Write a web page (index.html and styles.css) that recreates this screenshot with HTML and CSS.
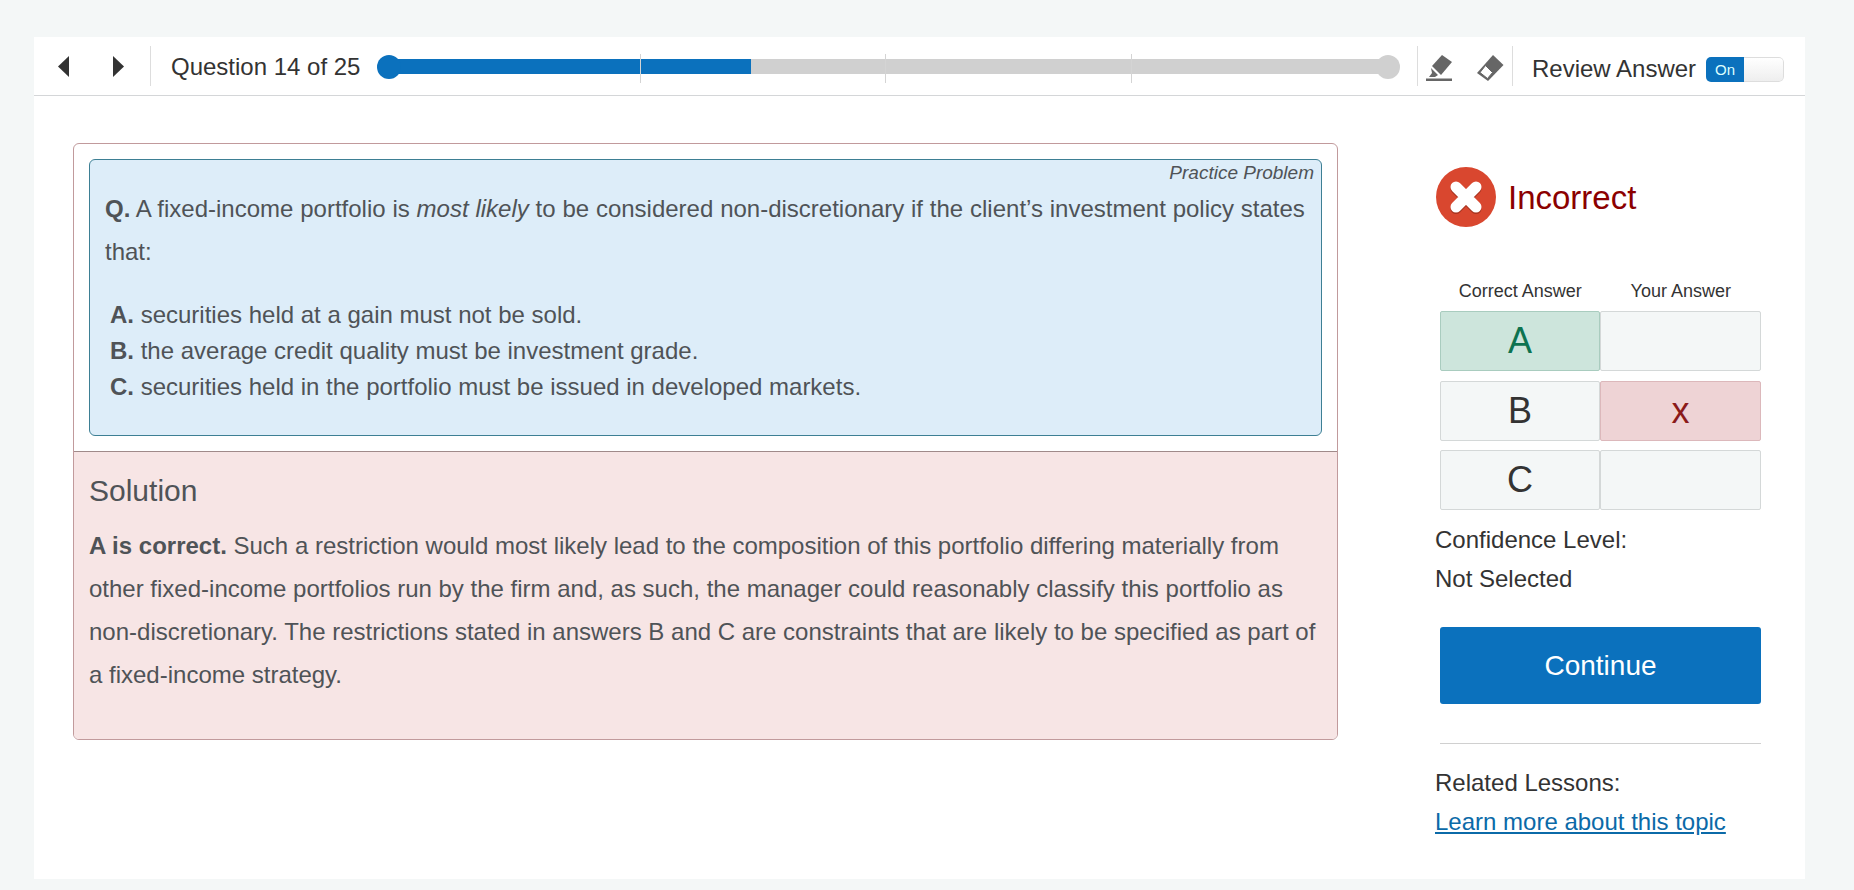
FILE: index.html
```html
<!DOCTYPE html>
<html lang="en">
<head>
    <meta charset="UTF-8">
    <meta name="viewport" content="width=device-width, initial-scale=1.0">
    <title>Question 14 of 25</title>
    <link rel="stylesheet" href="styles.css">
</head>
<body>
    <div class="card">
        <!-- Top toolbar -->
        <div class="toolbar">
            <div class="nav-arrows">
                <svg class="arrow" width="14" height="23" viewBox="0 0 14 23"><path d="M13 1V22L2 11.500Z" fill="#333"/></svg>
                <svg class="arrow" width="14" height="23" viewBox="0 0 14 23"><path d="M1 1V22L12 11.500Z" fill="#333"/></svg>
            </div>
            <div class="question-count">Question 14 of 25</div>
            <div class="progress">
                <div class="progress-fill"></div>
                <span class="tick tick-1"></span>
                <span class="tick tick-2"></span>
                <span class="tick tick-3"></span>
                <span class="thumb thumb-start"></span>
                <span class="thumb thumb-end"></span>
            </div>
            <div class="tools">
                <svg width="26" height="26" viewBox="0 0 26 26">
                    <path d="M16 0 26 7 15 20 6 11Z" fill="#666"/>
                    <path d="M5 13 12 20 9 22H3L6 18Z" fill="#666"/>
                    <rect x="0" y="23.500" width="26" height="2.500" fill="#666"/>
                </svg>
                <svg width="27" height="26" viewBox="0 0 27 26">
                    <path d="M16 0 26.500 10 11 26 0 18Z" fill="#666"/>
                    <path d="M8.500 10.500 15.500 17.500 10.500 23.500 3 17.500Z" fill="#fff" stroke="#666" stroke-width="1"/>
                </svg>
            </div>
            <div class="review">
                <span class="review-label">Review Answer</span>
                <div class="toggle">
                    <span class="toggle-on">On</span>
                    <span class="toggle-off"></span>
                </div>
            </div>
        </div>

        <div class="content">
            <!-- Question + solution -->
            <div class="panel">
                <div class="panel-top">
                    <div class="question">
                        <div class="practice-label">Practice Problem</div>
                        <p class="question-text"><b>Q.</b> A fixed-income portfolio is <i>most likely</i> to be considered non-discretionary if the client’s investment policy states that:</p>
                        <ul class="choices">
                            <li><b>A.</b> securities held at a gain must not be sold.</li>
                            <li><b>B.</b> the average credit quality must be investment grade.</li>
                            <li><b>C.</b> securities held in the portfolio must be issued in developed markets.</li>
                        </ul>
                    </div>
                </div>
                <div class="solution">
                    <h2>Solution</h2>
                    <p><b>A is correct.</b> Such a restriction would most likely lead to the composition of this portfolio differing materially from other fixed-income portfolios run by the firm and, as such, the manager could reasonably classify this portfolio as non-discretionary. The restrictions stated in answers B and C are constraints that are likely to be specified as part of a fixed-income strategy.</p>
                </div>
            </div>

            <!-- Result sidebar -->
            <div class="sidebar">
                <div class="result">
                    <svg width="60" height="60" viewBox="0 0 60 60">
                        <circle cx="30" cy="30" r="30" fill="#d9472f"/>
                        <path d="M20 20 40 40M40 20 20 40" stroke="#a93420" stroke-width="11" stroke-linecap="round" transform="translate(0 1.500)"/>
                        <path d="M20 20 40 40M40 20 20 40" stroke="#fff" stroke-width="11" stroke-linecap="round"/>
                    </svg>
                    <span class="result-label">Incorrect</span>
                </div>
                <div class="answer-heads">
                    <span>Correct Answer</span>
                    <span>Your Answer</span>
                </div>
                <div class="answer-rows">
                    <div class="answer-row">
                        <div class="cell cell-correct">A</div>
                        <div class="cell"></div>
                    </div>
                    <div class="answer-row">
                        <div class="cell">B</div>
                        <div class="cell cell-wrong">x</div>
                    </div>
                    <div class="answer-row">
                        <div class="cell">C</div>
                        <div class="cell"></div>
                    </div>
                </div>
                <div class="info">Confidence Level:</div>
                <div class="info">Not Selected</div>
                <button class="continue">Continue</button>
                <hr class="divider">
                <div class="info">Related Lessons:</div>
                <div class="info"><a href="#" class="lesson-link">Learn more about this topic</a></div>
            </div>
        </div>
    </div>
</body>
</html>
```

FILE: styles.css
```css
/* General */
body {
    margin: 0;
    background-color: #f4f7f7;
    font-family: "Liberation Sans", Arial, sans-serif;
    color: #333;
    height: 890px;
    overflow: hidden;
}

.card {
    margin: 37px 49px 0 34px;
    height: 842px;
    background-color: #fff;
}

/* Toolbar */
.toolbar {
    display: flex;
    align-items: center;
    height: 58px;
    border-bottom: 1px solid #d4d6d8;
}

.nav-arrows {
    display: flex;
    align-items: center;
    gap: 42px;
    width: 117px;
    height: 40px;
    padding-left: 22px;
    box-sizing: border-box;
    border-right: 1px solid #ddd;
}

.question-count {
    margin: 2px 0 0 20px;
    width: 207px;
    font-size: 24px;
    white-space: nowrap;
}

.progress {
    position: relative;
    width: 1021px;
    height: 15px;
    border-radius: 8px;
    background-color: #d0d0d0;
}

.progress-fill {
    width: 373px;
    height: 100%;
    border-radius: 8px 0 0 8px;
    background-color: #0b71bd;
}

.tick {
    position: absolute;
    top: -5px;
    width: 1px;
    height: 29px;
    background-color: #d4d4d4;
}

.tick-1 { left: 262px; }
.tick-2 { left: 507px; }
.tick-3 { left: 753px; }

.thumb {
    position: absolute;
    top: -4px;
    width: 24px;
    height: 24px;
    border-radius: 50%;
}

.thumb-start { left: -1px; background-color: #0b71bd; }
.thumb-end { right: -1px; background-color: #d0d0d0; }

.tools {
    display: flex;
    align-items: center;
    gap: 25px;
    box-sizing: border-box;
    height: 40px;
    margin-left: 18px;
    padding: 4px 8px 0 8px;
    border-left: 1px solid #ddd;
    border-right: 1px solid #ddd;
}

.review {
    display: flex;
    align-items: center;
    gap: 10px;
    margin: 7px 0 0 19px;
    font-size: 24px;
}

.review-label {
    margin-bottom: 2px;
}

.toggle {
    display: flex;
    width: 78px;
    height: 25px;
    border-radius: 5px;
    overflow: hidden;
}

.toggle-on {
    width: 38px;
    background-color: #0b71bd;
    color: #dff;
    font-size: 15px;
    line-height: 25px;
    text-align: center;
}

.toggle-off {
    flex: 1;
    background: linear-gradient(#fff, #eee);
    border: 1px solid #ddd;
    border-left: none;
    border-radius: 0 5px 5px 0;
}

/* Main layout */
.content {
    display: flex;
    padding: 47px 0 0 39px;
}

.panel {
    box-sizing: border-box;
    width: 1265px;
    height: 597px;
    border: 1px solid #c19a9c;
    border-radius: 6px;
    overflow: hidden;
    color: #4f5357;
    font-size: 24px;
}

.panel-top {
    padding: 15px;
}

.question {
    box-sizing: border-box;
    position: relative;
    height: 277px;
    padding: 27px 15px 0;
    background-color: #ddedf9;
    border: 1px solid #3d7f94;
    border-radius: 6px;
}

.practice-label {
    position: absolute;
    top: 2px;
    right: 7px;
    font-size: 19px;
    font-style: italic;
}

.question-text {
    margin: 0;
    line-height: 43px;
    word-spacing: 0.15px;
}

.choices {
    list-style: none;
    margin: 24px 0 0;
    padding: 0 0 0 5px;
    line-height: 36px;
}

.solution {
    height: 288px;
    padding: 0 15px;
    background-color: #f7e5e5;
    border-top: 1px solid #a08a8a;
}

.solution h2 {
    margin: 0;
    padding-top: 21px;
    font-size: 30px;
    font-weight: normal;
    line-height: 36px;
}

.solution p {
    margin: 15px 0 0;
    line-height: 43px;
}

/* Sidebar */
.sidebar {
    width: 321px;
    margin-left: 102px;
    font-size: 24px;
}

.result {
    display: flex;
    align-items: center;
    gap: 12px;
    margin: 24px 0 0 -4px;
    color: #8b0000;
    font-size: 33px;
}

.result-label {
    margin-top: 2px;
}

.answer-heads {
    display: flex;
    margin-top: 52px;
    font-size: 18px;
    line-height: 24px;
}

.answer-heads span {
    width: 50%;
    text-align: center;
}

.answer-rows {
    display: flex;
    flex-direction: column;
    gap: 10px;
    margin-top: 8px;
}

.answer-row {
    display: flex;
    height: 60px;
}

.answer-row:last-child {
    margin-top: -1px;
}

.cell {
    box-sizing: border-box;
    flex: 1;
    border: 1px solid #d4d8d8;
    border-radius: 2px;
    background-color: #f4f7f7;
    font-size: 36px;
    line-height: 58px;
    text-align: center;
}

.cell:first-child {
    flex: 0 0 160px;
}

.cell-correct {
    background-color: #cde5dc;
    border-color: #a9ccbf;
    color: #0d7350;
}

.cell-wrong {
    background-color: #eed3d5;
    border-color: #dcb8bb;
    color: #8b1a1a;
}

.info {
    margin-left: -5px;
    line-height: 39px;
}

.answer-rows + .info {
    margin-top: 10px;
}

.continue {
    display: block;
    width: 100%;
    height: 77px;
    margin-top: 29px;
    background-color: #0b71bd;
    color: #fff;
    border: none;
    border-radius: 3px;
    font-family: inherit;
    font-size: 28px;
}

.divider {
    margin: 39px 0 19px;
    border: none;
    border-top: 1px solid #d0d0d0;
}

.lesson-link {
    color: #0b6aa8;
}
```
